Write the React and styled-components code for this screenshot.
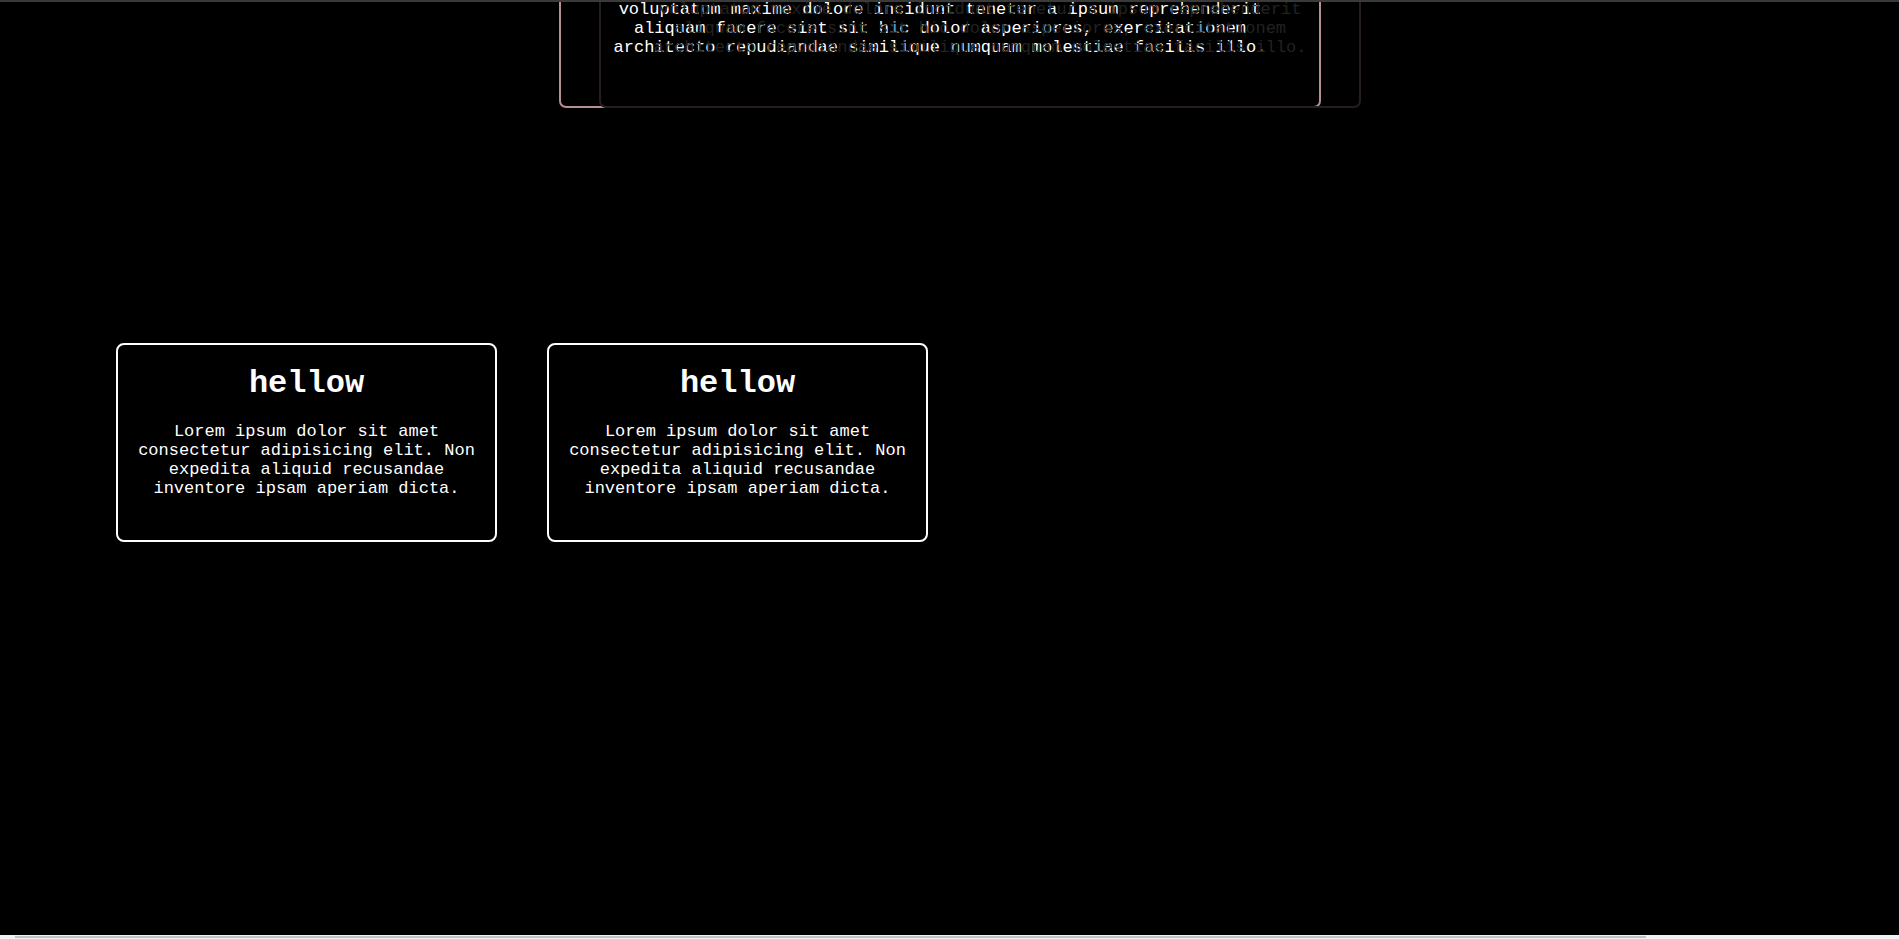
import React from 'react';
import styled, { createGlobalStyle } from 'styled-components';

const GlobalStyle = createGlobalStyle`
  html {
    background: #000;
  }
  body {
    margin: 0;
    background: #000;
    color: #fff;
    font-family: "Liberation Mono", "Courier New", monospace;
    font-size: 17px;
    overflow: hidden;
  }
`

const Page = styled.div`
  min-height: 939px;
  display: flex;
  flex-direction: column;
`

const TopRule = styled.div`
  position: fixed;
  top: 0;
  left: 0;
  right: 0;
  height: 2px;
  background: #3a3a3a;
  z-index: 5;
`

const ScrollTrack = styled.div`
  position: fixed;
  left: 0;
  right: 0;
  bottom: 0;
  height: 4px;
  padding: 1px 0 1px 15px;
  box-sizing: border-box;
  background: #f1f1f1;
  z-index: 5;
`

const ScrollThumb = styled.div`
  width: 1631px;
  height: 100%;
  background: #c1c1c1;
`

const Stack = styled.div`
  position: relative;
  width: 762px;
  margin: -58px 0 0 559px;
`

const Card = styled.div`
  box-sizing: border-box;
  padding: 56px 40px 49px;
  border: 2px solid ${p => p.$ghost ? '#261d20' : '#b68f93'};
  border-radius: 7px;
  text-align: center;
  color: ${p => p.$ghost ? '#222' : '#fff'};
  ${p => p.$ghost && `
    position: absolute;
    inset: 0;
    transform: translateX(40px);
  `}
`

const Text = styled.p`
  margin: 0;
`

const Row = styled.div`
  display: flex;
  gap: 50px;
  margin: 235px 0 0 116px;
`

const Box = styled.div`
  box-sizing: border-box;
  width: 381px;
  height: 199px;
  padding: 20px 16px 0;
  border: 2px solid #fff;
  border-radius: 8px;
  text-align: center;
`

const Title = styled.h1`
  margin: 0 0 20px;
  font-size: 32px;
  font-weight: bold;
`

const lorem = 'voluptatum maxime dolore incidunt tenetur a ipsum reprehenderit aliquam facere sint sit hic dolor asperiores, exercitationem architecto repudiandae similique numquam molestiae facilis illo.'
const short = 'Lorem ipsum dolor sit amet consectetur adipisicing elit. Non expedita aliquid recusandae inventore ipsam aperiam dicta.'

const App = () => {
  return (
    <>
      <GlobalStyle />
      <TopRule />
      <Page>
        <Stack>
          <Card $ghost>
            <Text>{lorem}</Text>
          </Card>
          <Card>
            <Text>{lorem}</Text>
          </Card>
        </Stack>
        <Row>
          {[0, 1].map(idx => (
            <Box key={idx}>
              <Title>hellow</Title>
              <Text>{short}</Text>
            </Box>
          ))}
        </Row>
      </Page>
      <ScrollTrack>
        <ScrollThumb />
      </ScrollTrack>
    </>
  )
}

export default App;
